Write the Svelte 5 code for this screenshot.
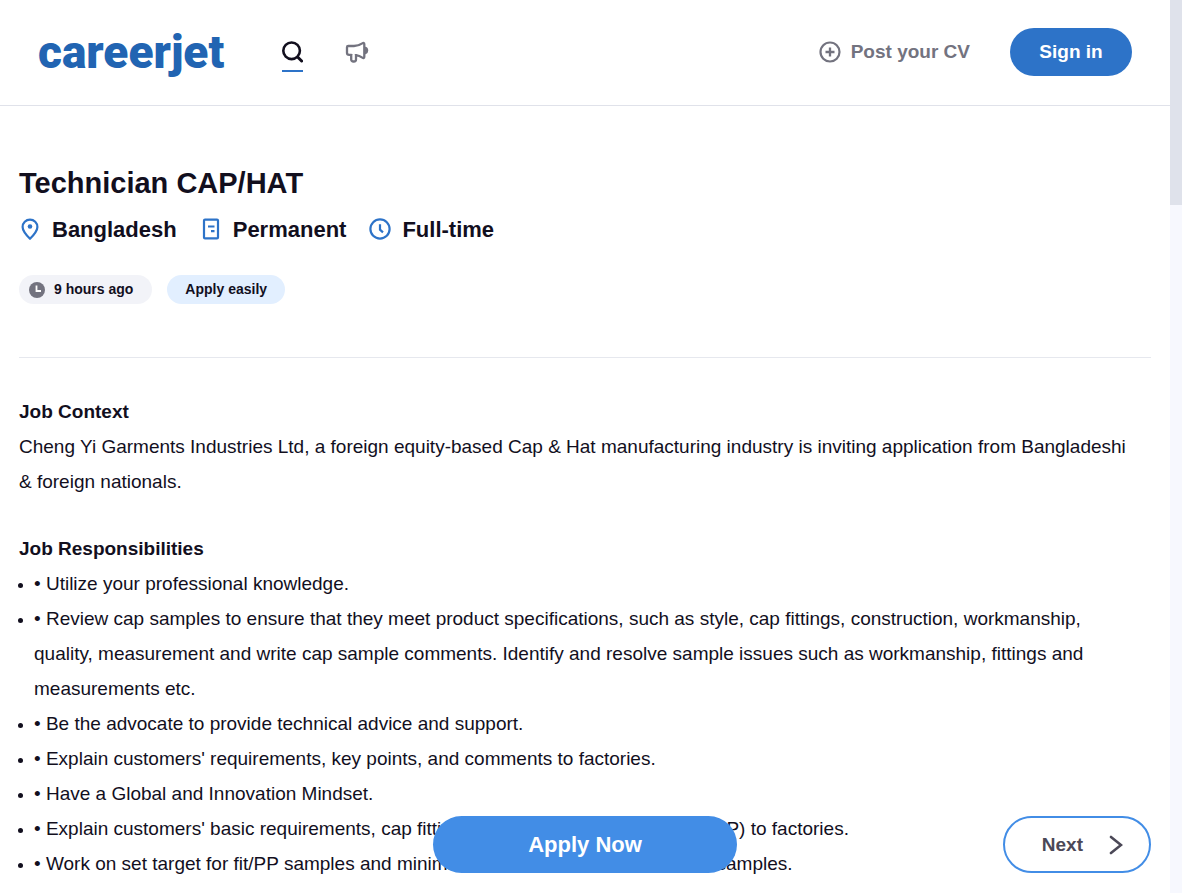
<script>
  const responsibilities = [
    'Utilize your professional knowledge.',
    'Review cap samples to ensure that they meet product specifications, such as style, cap fittings, construction, workmanship, quality, measurement and write cap sample comments. Identify and resolve sample issues such as workmanship, fittings and measurements etc.',
    'Be the advocate to provide technical advice and support.',
    "Explain customers' requirements, key points, and comments to factories.",
    'Have a Global and Innovation Mindset.',
    "Explain customers' basic requirements, cap fittings and comments (Proto, Fit & PP) to factories.",
    'Work on set target for fit/PP samples and minimize the number of revised fit/PP samples.',
  ];
</script>

<div class="window">
  <div class="page">
    <header>
      <a class="logo" href="#home">careerjet</a>
      <nav aria-label="Main">
        <a class="nav-link active" href="#search" aria-label="Search">
          <svg width="21" height="22" viewBox="0 0 21 22" fill="none" stroke="currentColor" stroke-width="2.6" stroke-linecap="round">
            <circle cx="9.6" cy="9.8" r="8.3" />
            <path d="M15.6 16l4 4" stroke-width="3" />
          </svg>
        </a>
        <a class="nav-link" href="#recruit" aria-label="Recruiters">
          <svg width="24" height="22" viewBox="0 0 24 22" fill="none" stroke="currentColor" stroke-width="2.3" stroke-linejoin="round">
            <path d="M2 6.200c0-.8.5-1.200 1.300-1.200H9c3.300 0 6-1 8.300-2.600 1.200-.8 2-.5 2 .9v12.400c0 1.300-.8 1.700-2 .9-2-1.400-4.100-2.200-6.300-2.500v4.400c0 1.200-.9 2-2.100 2H8.300c-1.200 0-2.100-.8-2.100-2V13.800H4.200C2.800 13.800 2 13.200 2 11.900z" />
            <path d="M6.200 14v-1M10.900 14v-1" />
            <path d="M20.400 6.500c2.800.8 2.800 5.200 0 6z" fill="currentColor" stroke-width="1.500" />
          </svg>
        </a>
      </nav>
      <a class="post" href="#cv">
        <svg width="22" height="22" viewBox="0 0 22 22" fill="none" stroke="currentColor" stroke-width="2.2">
          <circle cx="11" cy="11" r="9.5" />
          <path d="M11 6.500v9M6.500 11h9" stroke-width="2.300" />
        </svg>
        Post your CV
      </a>
      <button class="sign-in" type="button">Sign in</button>
    </header>

    <main>
      <section class="summary">
        <h1>Technician CAP/HAT</h1>
        <ul class="details">
          <li>
            <svg width="22" height="24" viewBox="0 0 22 24" fill="none" stroke="currentColor" stroke-width="2.2">
              <path d="M11 20.800C7.500 17.300 3.600 13.200 3.600 9a7.400 7.400 0 0 1 14.800 0c0 4.200-3.900 8.300-7.400 11.800z" stroke-linejoin="round" />
              <circle cx="11" cy="8.500" r="2.300" fill="currentColor" stroke="none" />
            </svg>
            Bangladesh
          </li>
          <li>
            <svg width="22" height="24" viewBox="0 0 22 24" fill="none" stroke="currentColor" stroke-width="2.2">
              <rect x="4" y="1.600" width="14" height="18.800" rx="1" />
              <path d="M8 8.500h6.500M11 13.200h3.500" />
            </svg>
            Permanent
          </li>
          <li>
            <svg width="22" height="24" viewBox="0 0 22 24" fill="none" stroke="currentColor" stroke-width="2.2">
              <circle cx="11" cy="11" r="9.600" />
              <path d="M11 6.300v5.400l3 2.600" />
            </svg>
            Full-time
          </li>
        </ul>
        <div class="badges">
          <span class="badge time">
            <svg width="16" height="16" viewBox="0 0 16 16">
              <circle cx="8" cy="8" r="8" fill="#73737f" />
              <path d="M7.500 3.500V9H12" fill="none" stroke="#fff" stroke-width="1.800" />
            </svg>
            9 hours ago
          </span>
          <span class="badge easy">Apply easily</span>
        </div>
      </section>

      <section class="content">
        <h2>Job Context</h2>
        <p>Cheng Yi Garments Industries Ltd, a foreign equity-based Cap &amp; Hat manufacturing industry is inviting application from Bangladeshi &amp; foreign nationals.</p>
        <h2>Job Responsibilities</h2>
        <ul>
          {#each responsibilities as item}
            <li>• {item}</li>
          {/each}
        </ul>
      </section>
    </main>

    <div class="actions">
      <button class="apply" type="button">Apply Now</button>
      <button class="next" type="button">
        Next
        <svg width="14" height="20" viewBox="0 0 14 20" fill="none" stroke="currentColor" stroke-width="2.6" stroke-linecap="round">
          <path d="M2 2l10 8L2 18" />
        </svg>
      </button>
    </div>
  </div>
  <div class="scrollbar"><div class="thumb"></div></div>
</div>

<style>
  :global(body) {
    margin: 0;
  }
  .window {
    display: flex;
    height: 100vh;
    background: #fff;
    color: #120f1e;
    font-family: "Liberation Sans", Arial, sans-serif;
    font-size: 19px;
    line-height: 35px;
  }
  .page {
    position: relative;
    flex: 1;
    min-width: 0;
    overflow: hidden;
  }
  .scrollbar {
    width: 12px;
    background: #f7f8fe;
  }
  .thumb {
    height: 23%;
    background: #dfe2eb;
  }
  a {
    color: inherit;
    text-decoration: none;
  }
  button {
    border: 0;
    font: inherit;
    font-weight: bold;
    cursor: pointer;
  }
  svg {
    display: block;
    flex: none;
  }
  header {
    display: flex;
    align-items: center;
    box-sizing: border-box;
    height: 106px;
    padding: 0 38px 2px;
    border-bottom: 1px solid #e0e2ea;
  }
  .logo {
    color: #2164b2;
    font-family: Roboto, sans-serif;
    font-size: 46px;
    font-weight: 900;
    line-height: 60px;
  }
  nav {
    display: flex;
    gap: 42px;
    margin-left: 58px;
  }
  .nav-link {
    padding: 9px 0 7px;
    border-bottom: 2px solid transparent;
    color: #73737f;
  }
  .nav-link.active {
    border-color: #2d73c8;
    color: #120f1e;
  }
  .post {
    display: flex;
    align-items: center;
    gap: 10px;
    margin-left: auto;
    color: #73737f;
    font-weight: bold;
  }
  .sign-in {
    min-width: 122px;
    height: 48px;
    margin-left: 40px;
    padding: 0 28px;
    border-radius: 24px;
    background: #2d73c8;
    color: #fff;
  }
  main {
    padding: 0 19px;
  }
  .summary {
    padding: 60px 0 53px;
    border-bottom: 1px solid #e6e8ee;
  }
  h1 {
    margin: 0;
    font-size: 29px;
    line-height: 35px;
  }
  ul {
    margin: 0;
    padding: 0;
  }
  .details {
    display: flex;
    gap: 23px;
    margin-top: 11px;
    font-size: 22px;
    font-weight: bold;
    list-style: none;
  }
  .details li {
    display: flex;
    align-items: center;
    gap: 11px;
  }
  .details svg {
    color: #2d73c8;
  }
  .badges {
    display: flex;
    gap: 15px;
    margin-top: 28px;
    font-size: 14px;
    font-weight: bold;
    line-height: 29px;
  }
  .badge {
    display: flex;
    align-items: center;
    gap: 9px;
    border-radius: 15px;
  }
  .time {
    padding: 0 19px 0 10px;
    background: #f2f3f8;
  }
  .easy {
    padding: 0 18px;
    background: #e2efff;
  }
  .content {
    padding: 36px 16px 0 0;
  }
  h2 {
    margin: 0;
    font-size: 19px;
    line-height: 35px;
  }
  p {
    margin: 0 0 32px;
  }
  .content ul {
    padding-left: 15px;
  }
  .content li::marker {
    font-size: 16px;
  }
  .actions {
    position: absolute;
    right: 19px;
    bottom: 20px;
    left: 19px;
    display: grid;
    grid-template-columns: 1fr 304px 1fr;
  }
  .apply {
    grid-column: 2;
    height: 57px;
    border-radius: 29px;
    background: #428de6;
    color: #fff;
    font-size: 22px;
  }
  .next {
    display: flex;
    align-items: center;
    justify-self: end;
    gap: 26px;
    height: 57px;
    padding: 0 26px 0 37px;
    border: 2px solid #428de6;
    border-radius: 29px;
    background: #fff;
    color: #4b4857;
  }
</style>
